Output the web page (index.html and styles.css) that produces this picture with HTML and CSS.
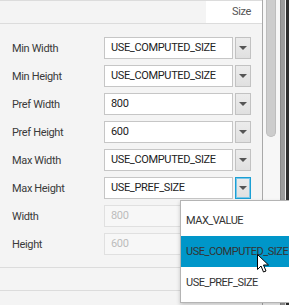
FILE: index.html
```html
<!DOCTYPE html>
<html>

<head>
  <title>Layout properties</title>
  <link rel="stylesheet" href="styles.css">
</head>

<body>
  <div class="frame">
    <div class="panel">
      <div class="header">
        <div class="headerFill"></div>
        <div class="headerCell">Size</div>
      </div>

      <div class="rows">
        <div class="row">
          <span class="label">Min Width</span>
          <div class="combo"><span class="field">USE_COMPUTED_SIZE</span><span class="arrowBtn"><i class="tri"></i></span></div>
        </div>
        <div class="row">
          <span class="label">Min Height</span>
          <div class="combo"><span class="field">USE_COMPUTED_SIZE</span><span class="arrowBtn"><i class="tri"></i></span></div>
        </div>
        <div class="row">
          <span class="label">Pref Width</span>
          <div class="combo"><span class="field">800</span><span class="arrowBtn"><i class="tri"></i></span></div>
        </div>
        <div class="row">
          <span class="label">Pref Height</span>
          <div class="combo"><span class="field">600</span><span class="arrowBtn"><i class="tri"></i></span></div>
        </div>
        <div class="row">
          <span class="label">Max Width</span>
          <div class="combo"><span class="field">USE_COMPUTED_SIZE</span><span class="arrowBtn"><i class="tri"></i></span></div>
        </div>
        <div class="row">
          <span class="label">Max Height</span>
          <div class="combo"><span class="field">USE_PREF_SIZE</span><span class="arrowBtn focused"><i class="tri"></i></span></div>
        </div>
        <div class="row">
          <span class="label">Width</span>
          <div class="combo"><span class="field disabled">800</span></div>
        </div>
        <div class="row">
          <span class="label">Height</span>
          <div class="combo"><span class="field disabled">600</span></div>
        </div>
      </div>

      <div class="section"></div>
      <div class="footer"></div>
    </div>

    <div class="scrollbar">
      <div class="thumb"></div>
    </div>

    <div class="edge">
      <div class="edgeA"></div>
      <div class="edgeB"></div>
      <div class="edgeC"></div>
      <div class="edgeD"></div>
    </div>
  </div>

  <ul class="popup">
    <li>MAX_VALUE</li>
    <li class="selected">USE_COMPUTED_SIZE</li>
    <li>USE_PREF_SIZE</li>
  </ul>

  <svg class="cursor" width="13" height="20" viewBox="0 0 13 20">
    <path d="M0.5 0.5 L0.5 15.5 L4 12 L6.5 18 L9 17 L6.5 11 L11.5 11 Z" fill="#fff" stroke="#000" stroke-width="1" stroke-linejoin="miter" />
  </svg>
</body>

</html>
```

FILE: styles.css
```css
body {
  margin: 0;
  width: 289px;
  height: 305px;
  overflow: hidden;
  position: relative;
  font-family: Roboto, Lato, sans-serif;
  font-size: 11px;
  letter-spacing: -0.35px;
  color: #333;
  background: #f4f4f4;
}

.frame {
  display: flex;
  height: 305px;
}

.panel {
  width: 262px;
  border-right: 1px solid #a9a9a9;
  background: #f4f4f4;
}

.header {
  display: flex;
  height: 22px;
  border-top: 1px solid #dcdcdc;
  border-bottom: 1px solid #dcdcdc;
}

.headerFill {
  flex-grow: 1;
}

.headerCell {
  width: 45px;
  padding-right: 11px;
  background: #fff;
  text-align: right;
  line-height: 22px;
  color: #555;
}

.rows {
  display: flex;
  flex-direction: column;
  gap: 6px;
  padding: 13px 0 0 12px;
}

.row {
  display: flex;
  align-items: center;
  height: 22px;
}

.label {
  width: 92px;
  color: #3a3a3a;
}

.combo {
  display: flex;
  gap: 2px;
  height: 22px;
}

.field {
  width: 121px;
  height: 20px;
  padding-left: 6px;
  border: 1px solid #c6c6c6;
  background: #fff;
  line-height: 20px;
  color: #222;
  white-space: nowrap;
  overflow: hidden;
}

.field.disabled {
  width: 139px;
  border-color: #e0e0e0;
  background: #f7f7f7;
  color: #bcbcbc;
}

.arrowBtn {
  width: 14px;
  height: 20px;
  border: 1px solid #c2c2c2;
  background: linear-gradient(#ececec, #e0e0e0);
  display: flex;
  align-items: center;
  justify-content: center;
}

.arrowBtn.focused {
  border: 1px solid #1b9fd4;
  box-shadow: inset 0 0 0 1px #7cc7e8;
}

.tri {
  width: 0;
  height: 0;
  border-left: 4px solid transparent;
  border-right: 4px solid transparent;
  border-top: 4px solid #555;
}

.section {
  margin-top: 12px;
  height: 22px;
  border-top: 1px solid #dcdcdc;
  border-bottom: 1px solid #dcdcdc;
}

.scrollbar {
  width: 17px;
  background: #f7f7f7;
  padding: 0 3px;
  box-sizing: border-box;
}

.thumb {
  width: 10px;
  height: 137px;
  background: #cdcdcd;
  border-radius: 0 0 5px 5px;
  border: 1px solid #bdbdbd;
  border-top: none;
  box-sizing: border-box;
}

.edge {
  display: flex;
}

.edgeA {
  width: 1px;
  background: #8a8a8a;
}

.edgeB {
  width: 4px;
  background: #9c9c9c;
}

.edgeC {
  width: 1px;
  background: #f0f0f0;
}

.edgeD {
  width: 3px;
  background: #2f2f2f;
}

/* dropdown list of the focused combo */
.popup {
  position: absolute;
  left: 180px;
  top: 200px;
  width: 108px;
  margin: 0;
  padding: 4px 0;
  list-style: none;
  background: #fff;
  border: 1px solid #b4b4b4;
  border-right: none;
  box-shadow: 0 2px 4px rgba(0, 0, 0, 0.2);
}

.popup li {
  height: 31px;
  line-height: 31px;
  padding-left: 5px;
  letter-spacing: -0.5px;
  color: #333;
  white-space: nowrap;
}

.popup li.selected {
  background: #0096c9;
}

.cursor {
  position: absolute;
  left: 257px;
  top: 254px;
}
```
